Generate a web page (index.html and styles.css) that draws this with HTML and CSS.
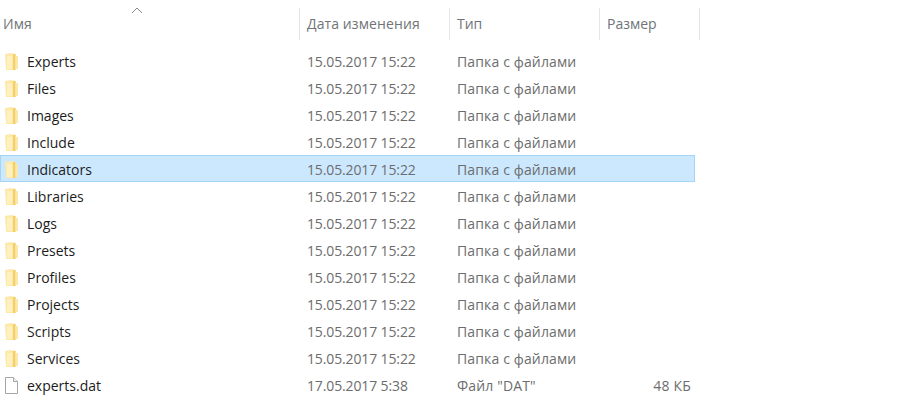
FILE: index.html
```html
<!DOCTYPE html>
<html lang="ru">
<head>
    <meta charset="UTF-8">
    <title>Experts</title>
    <link rel="stylesheet" href="styles.css">
</head>
<body>
    <svg class="defs" width="0" height="0">
        <symbol id="folder" viewBox="0 0 13 17">
            <path d="M0 1l6 -1 5 1V17H1z" fill="#fbe9ae"/>
            <path d="M1 1.500h8V17H1z" fill="#fde8a4"/>
            <path d="M2 3h5v13H2z" fill="#fff0c0"/>
            <path d="M8 1h2.500V17H8z" fill="#f3d06c"/>
            <path d="M10.500 3H13v13h-2.500z" fill="#fbe7a8"/>
        </symbol>
        <symbol id="file" viewBox="0 0 13 17">
            <path d="M.5 .5h8l4 4v12H.5z" fill="#fff" stroke="#a6a6a6"/>
            <path d="M8.500 .5v4h4" fill="#f4f4f4" stroke="#a6a6a6"/>
        </symbol>
    </svg>

    <div class="list">
        <div class="sort-arrow">
            <svg width="12" height="7" viewBox="0 0 12 7"><path d="M1 6l5-5 5 5" fill="none" stroke="#8a8a8a"/></svg>
        </div>
        <div class="header">
            <div class="col">Имя</div>
            <div class="col col-date">Дата изменения</div>
            <div class="col">Тип</div>
            <div class="col">Размер</div>
        </div>

        <div class="row"><div class="name"><svg class="icon"><use href="#folder"/></svg>Experts</div><div class="date">15.05.2017 15:22</div><div class="type">Папка с файлами</div><div class="size"></div></div>
        <div class="row"><div class="name"><svg class="icon"><use href="#folder"/></svg>Files</div><div class="date">15.05.2017 15:22</div><div class="type">Папка с файлами</div><div class="size"></div></div>
        <div class="row"><div class="name"><svg class="icon"><use href="#folder"/></svg>Images</div><div class="date">15.05.2017 15:22</div><div class="type">Папка с файлами</div><div class="size"></div></div>
        <div class="row"><div class="name"><svg class="icon"><use href="#folder"/></svg>Include</div><div class="date">15.05.2017 15:22</div><div class="type">Папка с файлами</div><div class="size"></div></div>
        <div class="row selected"><div class="name"><svg class="icon"><use href="#folder"/></svg>Indicators</div><div class="date">15.05.2017 15:22</div><div class="type">Папка с файлами</div><div class="size"></div></div>
        <div class="row"><div class="name"><svg class="icon"><use href="#folder"/></svg>Libraries</div><div class="date">15.05.2017 15:22</div><div class="type">Папка с файлами</div><div class="size"></div></div>
        <div class="row"><div class="name"><svg class="icon"><use href="#folder"/></svg>Logs</div><div class="date">15.05.2017 15:22</div><div class="type">Папка с файлами</div><div class="size"></div></div>
        <div class="row"><div class="name"><svg class="icon"><use href="#folder"/></svg>Presets</div><div class="date">15.05.2017 15:22</div><div class="type">Папка с файлами</div><div class="size"></div></div>
        <div class="row"><div class="name"><svg class="icon"><use href="#folder"/></svg>Profiles</div><div class="date">15.05.2017 15:22</div><div class="type">Папка с файлами</div><div class="size"></div></div>
        <div class="row"><div class="name"><svg class="icon"><use href="#folder"/></svg>Projects</div><div class="date">15.05.2017 15:22</div><div class="type">Папка с файлами</div><div class="size"></div></div>
        <div class="row"><div class="name"><svg class="icon"><use href="#folder"/></svg>Scripts</div><div class="date">15.05.2017 15:22</div><div class="type">Папка с файлами</div><div class="size"></div></div>
        <div class="row"><div class="name"><svg class="icon"><use href="#folder"/></svg>Services</div><div class="date">15.05.2017 15:22</div><div class="type">Папка с файлами</div><div class="size"></div></div>
        <div class="row"><div class="name"><svg class="icon"><use href="#file"/></svg>experts.dat</div><div class="date">17.05.2017 5:38</div><div class="type">Файл "DAT"</div><div class="size">48 КБ</div></div>
    </div>
</body>
</html>
```

FILE: styles.css
```css
html, body {
    margin: 0;
    background-color: #fff;
}
body {
    font-family: "Open Sans", "Noto Sans", sans-serif;
    font-size: 14px;
    color: #6d6d6d;
    overflow: hidden;
}
.defs {
    display: block;
    height: 0;
}
.list {
    position: relative;
    width: 700px;
    padding-top: 8px;
}
.sort-arrow {
    position: absolute;
    top: 7px;
    left: 131px;
    line-height: 0;
}
.header {
    display: grid;
    grid-template-columns: 300px 150px 150px 100px;
    height: 32px;
    margin-bottom: 7px;
}
.col {
    box-sizing: border-box;
    padding: 6px 0 0 7px;
    border-right: 1px solid #e6e6e6;
    color: #6f7478;
}
.col:first-child {
    padding-left: 3px;
}
.col-date {
    letter-spacing: 0.1px;
}
.row {
    box-sizing: border-box;
    display: grid;
    grid-template-columns: 300px 150px 150px 95px;
    width: 695px;
    height: 27px;
    padding-top: 1px;
    border: 1px solid transparent;
    align-items: center;
}
.row.selected {
    background-color: #cce8ff;
    border-color: #a5d4f5;
}
.name {
    display: flex;
    align-items: center;
    color: #1c1c1c;
    margin-left: -1px;
}
.date {
    padding-left: 6px;
    letter-spacing: -0.13px;
}
.type {
    padding-left: 6px;
    letter-spacing: 0.14px;
}
.size {
    text-align: right;
    padding-right: 5px;
    letter-spacing: 0.2px;
}
.icon {
    width: 13px;
    height: 17px;
    margin: 0 9px 0 5px;
    flex: none;
}
```
